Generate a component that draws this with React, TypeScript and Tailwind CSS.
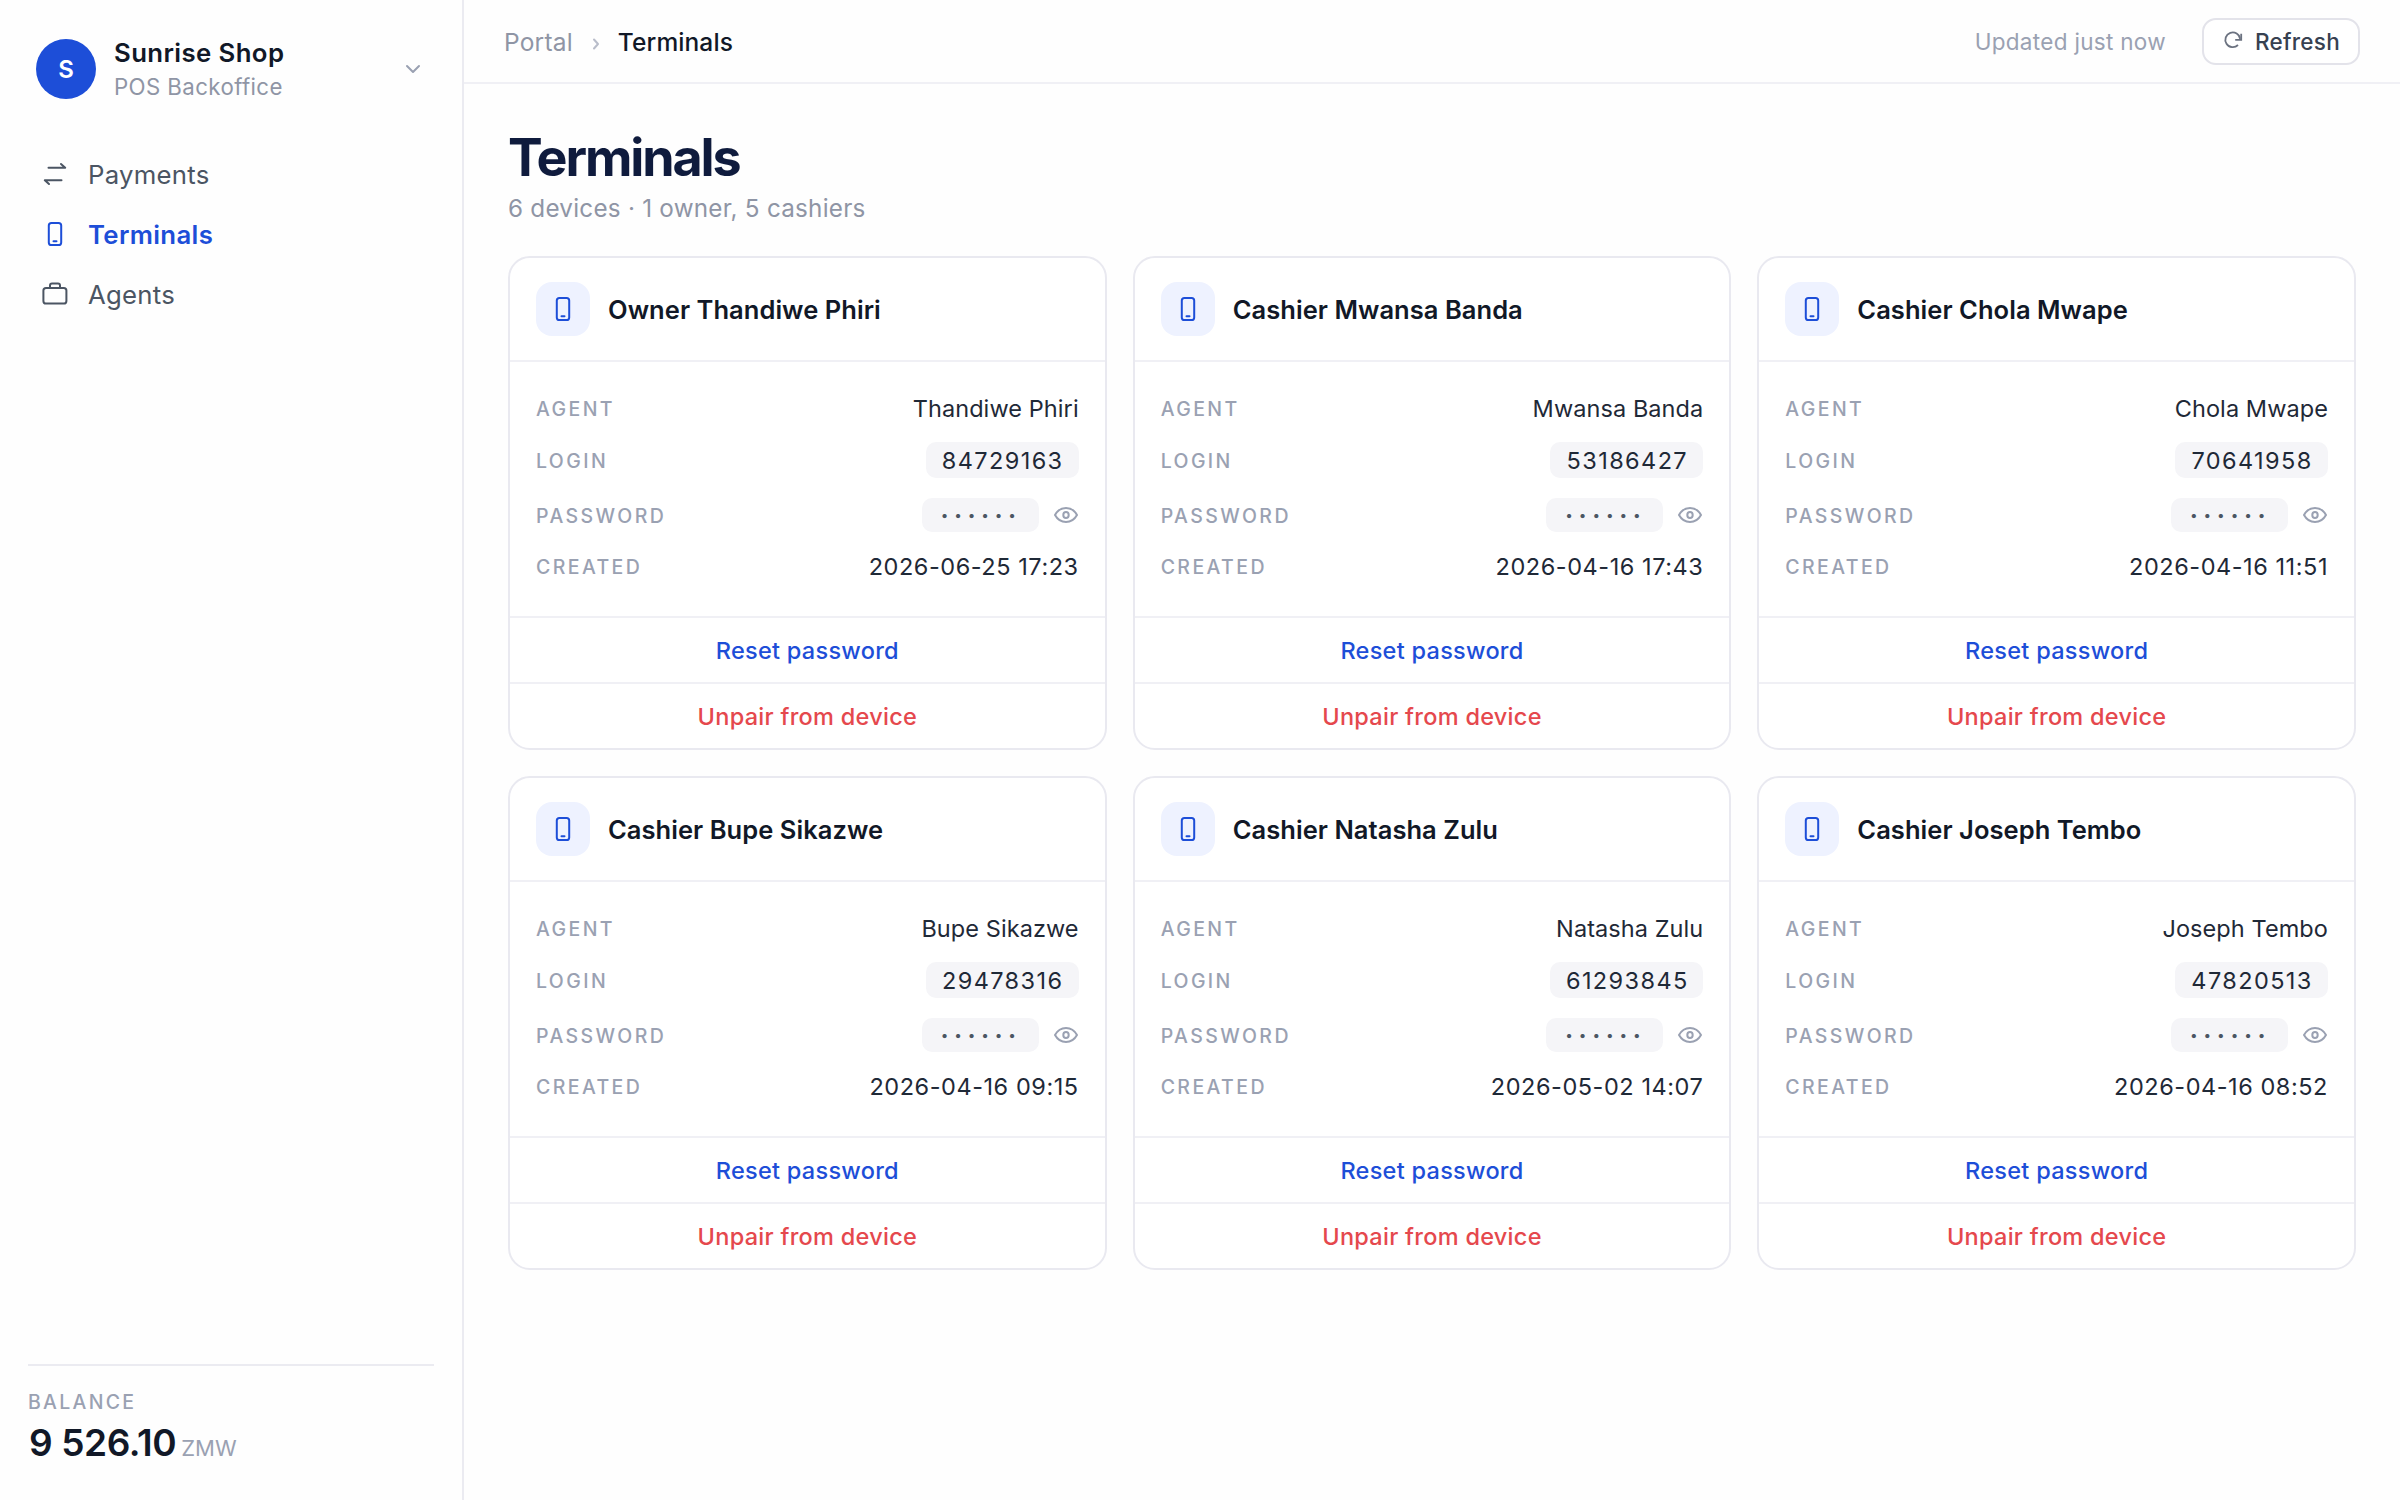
import type { ReactNode } from "react";

type Terminal = { title: string; agent: string; login: string; created: string };

const terminals: Terminal[] = [
  { title: "Owner Thandiwe Phiri", agent: "Thandiwe Phiri", login: "84729163", created: "2026-06-25 17:23" },
  { title: "Cashier Mwansa Banda", agent: "Mwansa Banda", login: "53186427", created: "2026-04-16 17:43" },
  { title: "Cashier Chola Mwape", agent: "Chola Mwape", login: "70641958", created: "2026-04-16 11:51" },
  { title: "Cashier Bupe Sikazwe", agent: "Bupe Sikazwe", login: "29478316", created: "2026-04-16 09:15" },
  { title: "Cashier Natasha Zulu", agent: "Natasha Zulu", login: "61293845", created: "2026-05-02 14:07" },
  { title: "Cashier Joseph Tembo", agent: "Joseph Tembo", login: "47820513", created: "2026-04-16 08:52" },
];

function PhoneIcon() {
  return (
    <svg viewBox="0 0 28 28" fill="none" stroke="currentColor" strokeWidth="2" strokeLinecap="round" className="size-7">
      <rect x="7.8" y="3" width="12.4" height="22" rx="2.600" />
      <path d="M12.500 21.200h3" />
    </svg>
  );
}

function TransferIcon() {
  return (
    <svg viewBox="0 0 28 28" fill="none" stroke="currentColor" strokeWidth="2" strokeLinecap="round" strokeLinejoin="round" className="size-7">
      <path d="M7.5 7.7h16.7l-4.2-3.7" />
      <path d="M20.5 20.3H3.8l4.2 3.7" />
    </svg>
  );
}

function BriefcaseIcon() {
  return (
    <svg viewBox="0 0 28 28" fill="none" stroke="currentColor" strokeWidth="2" strokeLinejoin="round" className="size-7">
      <rect x="2.4" y="8" width="23" height="15.5" rx="2.6" />
      <path d="M9 8V5.600a2 2 0 0 1 2-2h6a2 2 0 0 1 2 2V8" />
    </svg>
  );
}

function EyeIcon() {
  return (
    <svg viewBox="0 0 26 18" fill="none" stroke="currentColor" strokeWidth="2" strokeLinejoin="round" className="h-[18px] w-[26px]">
      <path d="M2 9C4.500 4.500 8.300 2 13 2s8.500 2.500 11 7c-2.500 4.500-6.300 7-11 7S4.500 13.500 2 9Z" />
      <ellipse cx="13" cy="9" rx="2.700" ry="3" />
    </svg>
  );
}

function NavItem({ icon, children, active }: { icon: ReactNode; children: ReactNode; active?: boolean }) {
  return (
    <a
      className={
        active
          ? "flex h-[60px] items-center gap-[19px] font-semibold tracking-[0.35px] text-[#1d4ed8]"
          : "flex h-[60px] items-center gap-[19px] tracking-[0.25px] text-[#4b5563]"
      }
    >
      {icon}
      <span className="pt-0.5">{children}</span>
    </a>
  );
}

function Label({ children }: { children: ReactNode }) {
  return (
    <span className="flex pt-0.5">
      <span className="text-[19.5px] font-[450] tracking-[2.4px] text-[#9aa1b2]">{children}</span>
    </span>
  );
}

function TerminalCard({ t }: { t: Terminal }) {
  return (
    <section className="overflow-hidden rounded-[22px] border-2 border-[#e9e9f0] bg-white">
      <header className="flex items-center gap-[18px] px-[26px] py-6">
        <div className="flex size-[54px] items-center justify-center rounded-[16px] bg-[#eef2ff] text-[#1d4ed8]">
          <PhoneIcon />
        </div>
        <h2 className="pt-0.5 text-[25.5px] font-semibold tracking-[0.05px] text-[#111827]">{t.title}</h2>
      </header>
      <div className="flex h-[256px] flex-col gap-[18px] border-t-2 border-[#f0f0f5] px-[26px] pt-8 text-[23.5px] text-[#1f2937]">
        <div className="flex h-[30px] items-center justify-between">
          <Label>AGENT</Label>
          <span className="tracking-[0.08px]">{t.agent}</span>
        </div>
        <div className="flex h-9 items-center justify-between">
          <span className="flex pt-px">
            <Label>LOGIN</Label>
          </span>
          <span className="flex h-9 w-[153px] items-center justify-center rounded-[10px] bg-[#f5f5f8] pt-px pl-px tracking-[1.4px]">{t.login}</span>
        </div>
        <div className="flex h-[38px] items-center justify-between">
          <span className="flex pt-px">
            <Label>PASSWORD</Label>
          </span>
          <span className="flex items-center gap-[14px]">
            <span className="flex h-[34px] w-[117px] items-center rounded-[10px] bg-[#f5f5f8] pl-[19px] text-[13.5px] tracking-[5.95px] text-[#4b5563]">
              ••••••
            </span>
            <span className="text-[#9aa1b2]">
              <EyeIcon />
            </span>
          </span>
        </div>
        <div className="flex h-[30px] items-center justify-between">
          <Label>CREATED</Label>
          <span className="tracking-[0.55px]">{t.created}</span>
        </div>
      </div>
      <button className="block h-[66px] w-full border-t-2 border-[#f0f0f5] pt-0.5 text-[23.5px] font-medium tracking-[0.28px] text-[#1d4ed8]">
        Reset password
      </button>
      <button className="block h-[66px] w-full border-t-2 border-[#f0f0f5] pt-0.5 text-[23.5px] font-medium tracking-[0.28px] text-[#e5484d]">
        Unpair from device
      </button>
    </section>
  );
}

export default function App() {
  return (
    <div className="flex h-[1500px] w-[2400px] overflow-hidden bg-[#fefefe] font-['Inter',sans-serif] text-[#111827]">
      <aside className="flex w-[464px] shrink-0 flex-col border-r-2 border-[#ebebf1] px-7">
        <div className="mt-[39px] flex h-[60px] items-center pr-3 pl-2">
          <div className="flex size-[60px] items-center justify-center rounded-full bg-[#1d4ed8] pt-0.5 text-[24px] font-semibold text-white">S</div>
          <div className="ml-[18px] flex-1">
            <div className="text-[25.75px] leading-[35px] font-semibold tracking-[0.4px]">Sunrise Shop</div>
            <div className="text-[22.25px] leading-[34px] tracking-[0.4px] text-[#8f95a5]">POS Backoffice</div>
          </div>
          <svg viewBox="0 0 18 12" fill="none" stroke="#9aa1b2" strokeWidth="2" strokeLinecap="round" strokeLinejoin="round" className="h-3 w-[18px]">
            <path d="m3 3 6 6 6-6" />
          </svg>
        </div>
        <nav className="mt-[45px] flex flex-col pl-[13px] text-[25.75px]">
          <NavItem icon={<TransferIcon />}>Payments</NavItem>
          <NavItem icon={<PhoneIcon />} active>
            Terminals
          </NavItem>
          <NavItem icon={<BriefcaseIcon />}>Agents</NavItem>
        </nav>
        <div className="mt-auto h-[136px] border-t-2 border-[#ebebf1] pt-[22px]">
          <div className="text-[19.5px] leading-7 font-[450] tracking-[2.3px] text-[#9aa1b2]">BALANCE</div>
          <div className="mt-px flex items-baseline gap-[5px] pl-px">
            <span className="text-[37px] leading-[52px] font-semibold tracking-[-0.4px]">9 526.10</span>
            <span className="text-[22px] text-[#9aa1b2]">ZMW</span>
          </div>
        </div>
      </aside>
      <main className="flex-1">
        <div className="flex h-[84px] items-center border-b-2 border-[#f0f0f5] pr-10 pl-10 text-[24.5px]">
          <span className="pt-[3px] tracking-[0.2px] text-[#8f95a5]">Portal</span>
          <svg viewBox="0 0 8 14" fill="none" stroke="#b9bdca" strokeWidth="2" strokeLinecap="round" strokeLinejoin="round" className="mt-[5px] ml-[19px] h-[14px] w-2">
            <path d="m2 2.500 4 4.500-4 4.500" />
          </svg>
          <span className="ml-[18px] pt-[3px] font-medium tracking-[0.1px]">Terminals</span>
          <span className="ml-auto pt-0.5 text-[22.5px] tracking-[0.31px] text-[#9aa1b2]">Updated just now</span>
          <button className="ml-9 flex h-[47px] w-[158px] items-center rounded-[14px] border-2 border-[#e3e3ea] bg-white pl-[19px] text-[22.5px] font-medium tracking-[0.25px] text-[#374151]">
            <svg viewBox="0 0 20 20" fill="none" stroke="#6b7280" strokeWidth="1.800" className="mr-3 -mt-0.5 size-5 shrink-0">
              <path d="M15 15A7.400 7.400 0 1 1 17.100 8.900" />
              <path d="M18.200 3.800v6h-6" />
            </svg>
            <span className="pt-0.5">Refresh</span>
          </button>
        </div>
        <div className="px-11 pt-[42px]">
          <h1 className="text-[52px] leading-[64px] font-bold tracking-[-2.1px] text-[#0f1b3d]">Terminals</h1>
          <p className="h-[66px] text-[24.25px] leading-[38px] tracking-[0.24px] text-[#8f95a5]">6 devices · 1 owner, 5 cashiers</p>
          <div className="grid grid-cols-3 gap-[26px]">
            {terminals.map((t) => (
              <TerminalCard key={t.login} t={t} />
            ))}
          </div>
        </div>
      </main>
    </div>
  );
}
